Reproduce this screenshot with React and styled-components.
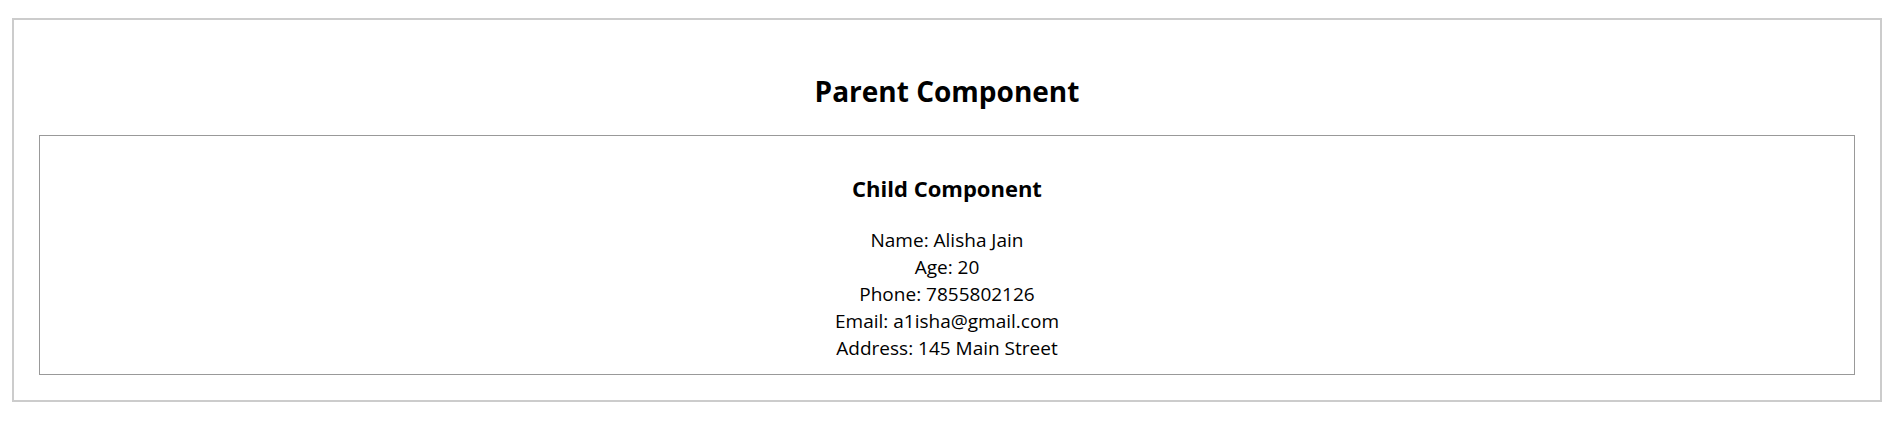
import React from "react";
import styled, { createGlobalStyle } from "styled-components";

const Global = createGlobalStyle`
  html, body { margin: 0; padding: 0; background: #fff; }
  body { font-family: "Open Sans", "Noto Sans", sans-serif; color: #000; }
`;

const Page = styled.div`
  padding: 18px 15px 45px 12px;
`;

const Outer = styled.section`
  border: 2px solid #cccccc;
  padding: 54px 25px 25px;
  text-align: center;
`;

const Title = styled.h2`
  margin: 0 0 27px;
  font-size: 28px;
  line-height: 34px;
  font-weight: 700;
`;

const Inner = styled.div`
  border: 1px solid #999999;
  padding: 38px 20px 12px;
`;

const SubTitle = styled.h3`
  margin: 0 0 25px;
  font-size: 22px;
  line-height: 28px;
  font-weight: 700;
`;

const Line = styled.div`
  font-size: 19px;
  line-height: 27px;
`;

const data = [
  ["Name", "Alisha Jain"],
  ["Age", "20"],
  ["Phone", "7855802126"],
  ["Email", "a1isha@gmail.com"],
  ["Address", "145 Main Street"],
];

export default function App() {
  return (
    <>
      <Global />
      <Page>
        <Outer>
          <Title>Parent Component</Title>
          <Inner>
            <SubTitle>Child Component</SubTitle>
            {data.map(([k, v]) => (
              <Line key={k}>
                {k}: {v}
              </Line>
            ))}
          </Inner>
        </Outer>
      </Page>
    </>
  );
}
